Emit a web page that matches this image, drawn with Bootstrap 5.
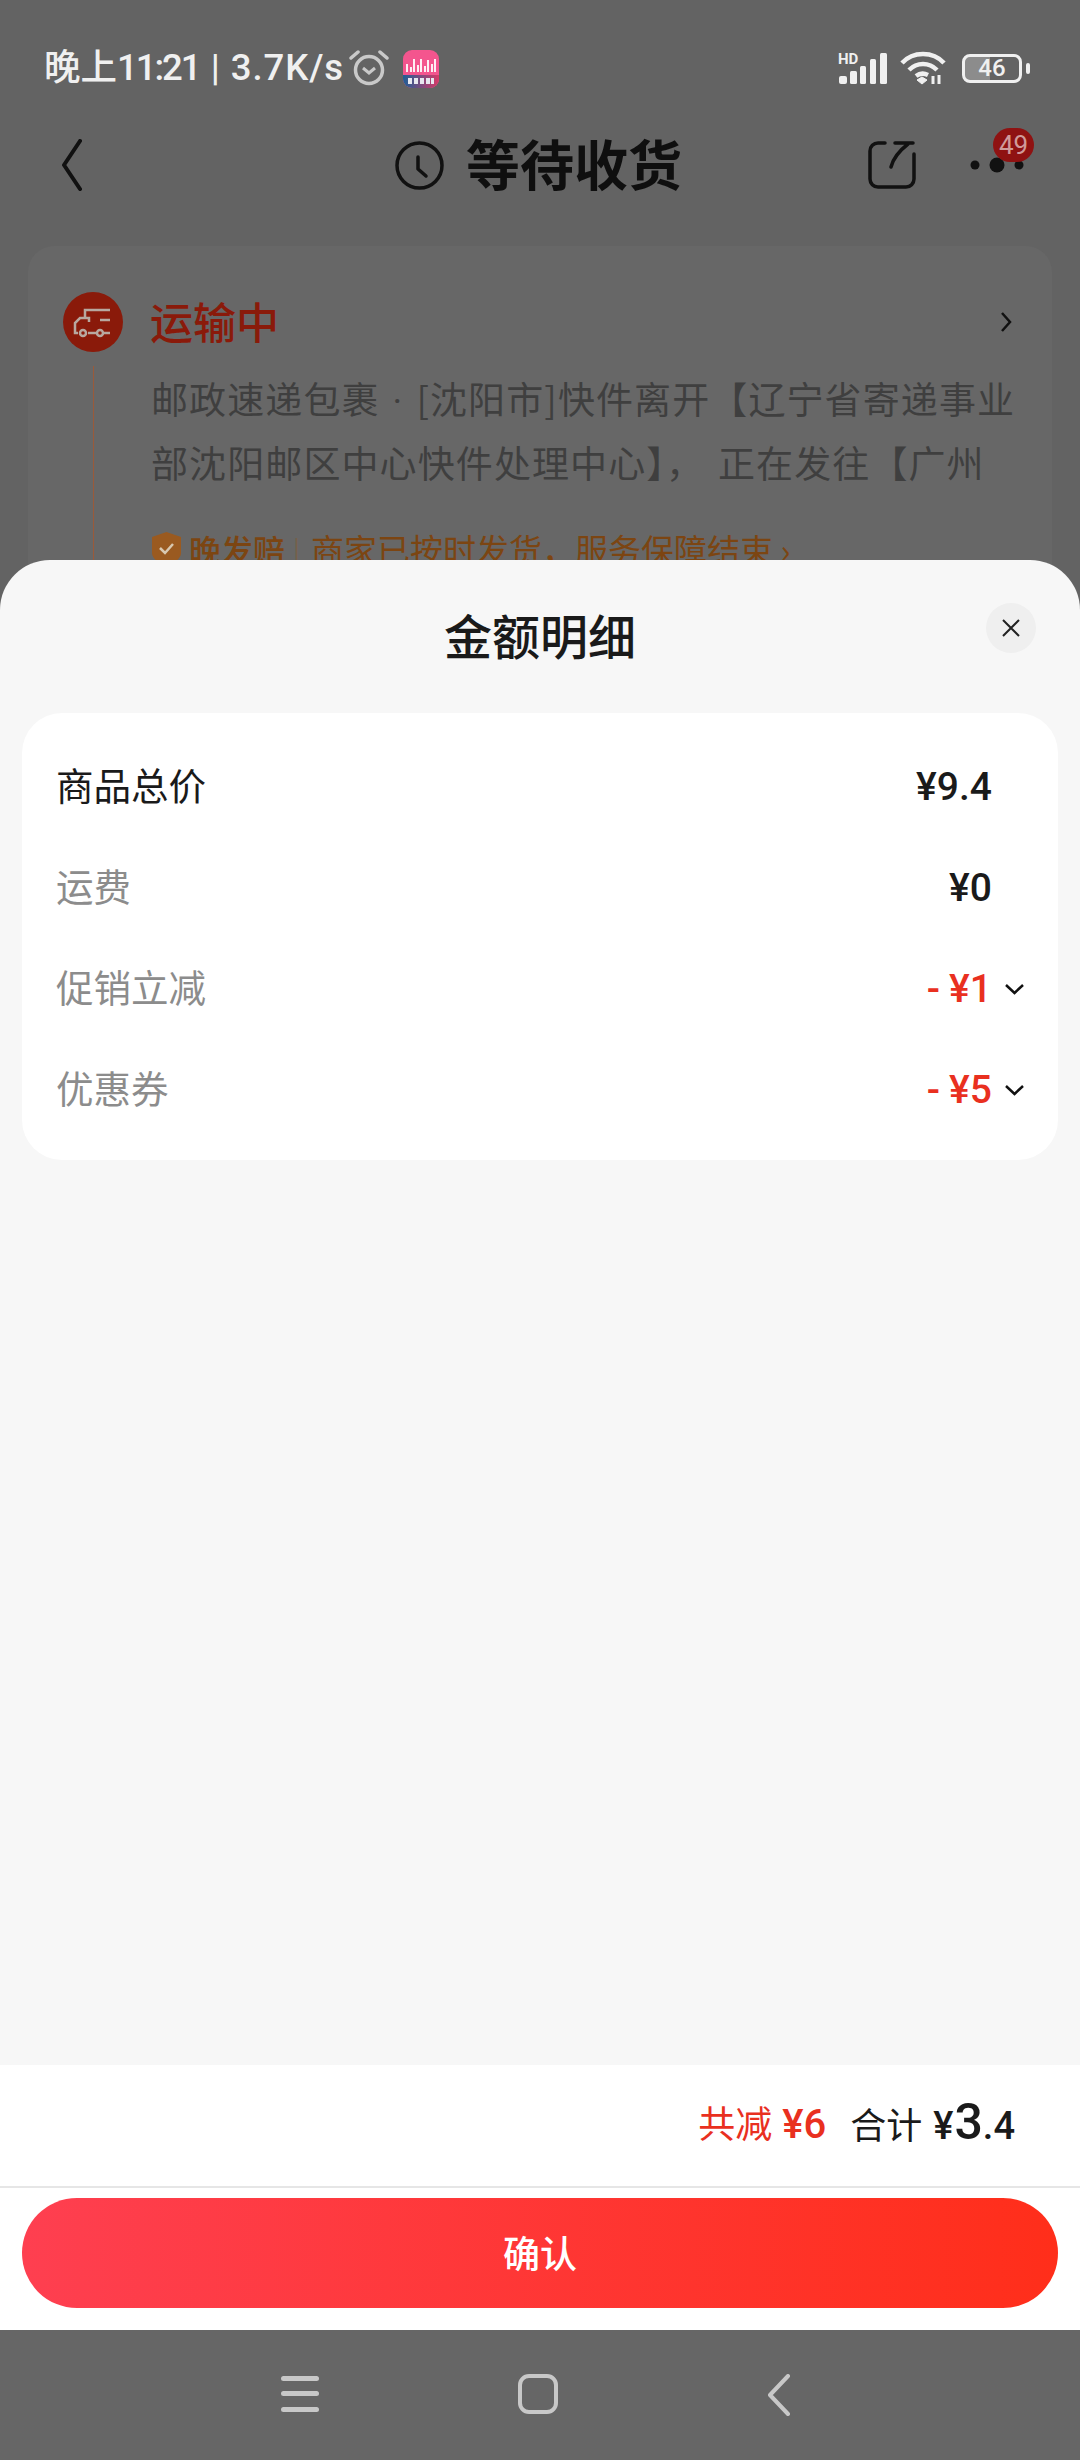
<!DOCTYPE html>
<html lang="zh-CN">

<head>
    <meta charset="UTF-8">
    <meta name="viewport" content="width=device-width, initial-scale=1.0">
    <title>金额明细</title>
    <link href="https://cdn.jsdelivr.net/npm/bootstrap@5.3.0/dist/css/bootstrap.min.css" rel="stylesheet">
    <style>
        body {
            margin: 0;
            width: 1080px;
            height: 2460px;
            background-color: #636363;
            font-family: "Noto Sans CJK SC", "Liberation Sans", sans-serif;
            color: #111;
        }
        .num { font-family: Roboto, "Liberation Sans", sans-serif; font-weight: 500; }
        .page-back { height: 2330px; overflow: hidden; }

        .status-row { height: 116px; padding: 44px 50px 0 44px; color: #f0f0f0; }
        .status-time { font-family: Roboto, "Noto Sans CJK SC", sans-serif; font-size: 36.5px; font-weight: 500; line-height: 48px; white-space: nowrap; }
        .time-digits { letter-spacing: -2px; }
        .time-sep { margin: 0 2px; }
        .time-speed { letter-spacing: .9px; }
        .status-alarm { margin: 6px 0 0 5px; }
        .app-tile { margin: 6px 0 0 14px; }
        .status-icons { height: 48px; }
        .status-wifi { margin-left: 12px; }
        .batt-box {
            width: 60px; height: 29px; margin-left: 16px;
            border: 3px solid #f0f0f0; border-radius: 8px;
            font: 500 24px/23px Roboto, sans-serif; color: #f0f0f0; text-align: center;
            background: linear-gradient(90deg, #8c8c8c 46%, transparent 46%);
        }
        .batt-cap { width: 4px; height: 11px; margin-left: 4px; background: #f0f0f0; border-radius: 2px; }

        .title-row { height: 98px; margin-bottom: 32px; padding: 0 56px 0 62px; position: relative; }
        .title-main { font-size: 54px; font-weight: 700; line-height: 70px; color: #0f0f0f; margin: 0 0 4px 22px; }
        .title-clock { margin-left: 313px; }
        .title-share { margin-left: auto; }
        .title-more { margin-left: 54px; }
        .msg-badge {
            position: absolute; left: 993px; top: 12px;
            width: 41px; height: 34px; border-radius: 17px;
            background: #8f1212; color: #d09a9a;
            font: 400 26px/34px Roboto, sans-serif; text-align: center;
        }

        .track-panel { margin: 0 28px; height: 400px; background: #676767; border-radius: 26px 26px 0 0; padding: 46px 40px 0 35px; }
        .track-head { height: 60px; }
        .track-title { font-size: 43px; line-height: 60px; font-weight: 500; color: #8a1a0a; margin: 0 0 5px 27px; }
        .track-body { margin-left: 30px; margin-top: 14px; border-left: 1px solid #9a5a3a; padding: 2px 0 0 57px; height: 300px; }
        .track-text { font-size: 37px; letter-spacing: 1.1px; line-height: 61px; color: #3f3f3f; width: 880px; white-space: nowrap; }
        .track-dot { font-family: Roboto, sans-serif; margin: 0 13px; }
        .track-comma { margin-right: 14px; }
        .track-tag { margin-top: 34px; font-size: 33px; line-height: 44px; color: #7c4512; white-space: nowrap; }
        .tag-lead { font-size: 32px; font-weight: 500; margin-left: 7px; }
        .tag-sep { color: #76604a; margin: 0 11px 0 8px; font-size: 26px; }

        .sheet {
            position: absolute; left: 0; right: 0; top: 560px; height: 1770px;
            background: #f7f7f7; border-radius: 50px 50px 0 0;
        }
        .sheet-head { height: 153px; position: relative; }
        .sheet-title { font-size: 48px; font-weight: 500; line-height: 64px; padding-top: 42px; color: #1a1a1a; }
        .sheet-close {
            position: absolute; left: 986px; top: 43px;
            width: 50px; height: 50px; border-radius: 50%; background: #efefef;
        }
        .fee-panel { margin: 0 22px; height: 447px; background: #fff; border-radius: 40px; padding-top: 23px; }
        .fee-row { height: 101px; padding-left: 34px; }
        .fee-label { font-size: 37.5px; line-height: 50px; color: #8c8c8c; margin-top: -6px; }
        .fee-label.on { color: #1a1a1a; }
        .fee-val { font-size: 39px; line-height: 50px; color: #1a1a1a; margin-left: auto; margin-right: 66px; }
        .fee-val.cut { color: #e9301f; margin-right: 0; }
        .fee-val.cut .dash { margin-right: 9px; }
        .fee-caret { margin-left: 12px; margin-right: 33px; }

        .sum-bar { height: 123px; background: #fff; border-bottom: 2px solid #e6e6e6; padding-right: 65px; margin-top: auto; }
        .sum-cut { font-size: 37px; line-height: 50px; color: #e9301f; margin-top: -4px; }
        .sum-cut .num { font-size: 40px; margin-left: 10px; }
        .sum-all { font-size: 36px; line-height: 50px; color: #1a1a1a; margin: -4px 0 0 24px; white-space: nowrap; }
        .sum-yen { font-size: 38px; margin-left: 11px; }
        .sum-big { font-size: 50px; line-height: 50px; margin-left: 1px; }
        .sum-dec { font-size: 38px; }
        .confirm-wrap { height: 142px; background: #fff; padding: 10px 22px 0; }
        .btn-confirm {
            width: 100%; height: 110px; border: 0; border-radius: 55px;
            background: linear-gradient(90deg, #fe3f50, #ff2e1a);
            color: #fff; font-size: 37px; font-weight: 500;
        }
        .btn-confirm:hover, .btn-confirm:active { background: linear-gradient(90deg, #fe3f50, #ff2e1a); color: #fff; }

        .sys-nav { height: 130px; background: #666; padding-top: 44px; }
        .nav-menu { margin-left: 281px; }
        .nav-home { margin-left: 199px; }
        .nav-back { margin-left: 207px; }
    </style>
</head>

<body>
    <div class="page-back">
        <div class="status-row d-flex align-items-start">
            <span class="status-time">晚上<span class="time-digits">11:21</span> <span class="time-sep">|</span> <span class="time-speed">3.7K/s</span></span>
            <svg class="status-alarm" width="40" height="36" viewBox="0 0 40 36" fill="none" stroke="#c9c9c9">
                <circle cx="20" cy="20" r="13.500" stroke-width="3.500"/>
                <path d="M14 18l6 5 6-5" stroke-width="3"/>
                <path d="M2 8l7-6M38 8l-7-6" stroke-width="3.500" stroke-linecap="round"/>
            </svg>
            <svg class="app-tile" width="36" height="38" viewBox="0 0 36 38">
                <defs>
                    <linearGradient id="bandFill" x1="0" x2="1" y1="0" y2="0">
                        <stop offset="0" stop-color="#1f5f96"/>
                        <stop offset="1" stop-color="#d83a68"/>
                    </linearGradient>
                </defs>
                <rect width="36" height="38" rx="9" fill="#f4558e"/>
                <path d="M0 25h36v4a9 9 0 0 1-9 9H9a9 9 0 0 1-9-9z" fill="url(#bandFill)"/>
                <path d="M4 14v8M8 17v5M11 9v13M15 15v7M18 9v13M22 16v6M25 10v12M29 14v8M32 9v13" stroke="#fff" stroke-width="1.800"/>
                <path d="M5 28h4v6H5zM11 28h4v6h-4zM17 28h4v6h-4zM23 28h4v6h-4zM28 28h3v6h-3z" fill="#e8e8f0"/>
            </svg>
            <div class="ms-auto d-flex align-items-center status-icons">
                <svg width="50" height="33" viewBox="0 0 50 33" fill="#f0f0f0">
                    <rect x="1" y="24" width="8" height="8" rx="2"/>
                    <rect x="12" y="19" width="7" height="13" rx="1.500"/>
                    <rect x="22" y="14" width="6" height="18" rx="1.500"/>
                    <rect x="32" y="7" width="6" height="25" rx="1.500"/>
                    <rect x="42" y="1" width="7" height="31" rx="1.500"/>
                    <text x="0" y="12" font-family="Roboto, sans-serif" font-size="15" font-weight="700">HD</text>
                </svg>
                <svg class="status-wifi" width="46" height="34" viewBox="0 0 46 34" fill="none" stroke="#f0f0f0" stroke-width="4.500">
                    <path d="M2 12C13 0 33 0 44 12"/>
                    <path d="M9 19c8-8 20-8 28 0"/>
                    <path d="M16 25c4-3 8-3 12-1"/>
                    <path d="M17 29l5-3 5 3-5 4z" fill="#f0f0f0" stroke-width="1"/>
                    <path d="M33 25v8M39 24v9" stroke-width="3"/>
                </svg>
                <div class="batt-box">46</div>
                <div class="batt-cap"></div>
            </div>
        </div>

        <div class="title-row d-flex align-items-center">
            <svg width="20" height="52" viewBox="0 0 20 52" fill="none" stroke="#111" stroke-width="4" stroke-linecap="round" stroke-linejoin="round">
                <path d="M18 2L2 26l16 24"/>
            </svg>
            <svg class="title-clock" width="49" height="49" viewBox="0 0 49 49" fill="none" stroke="#111" stroke-width="3.500" stroke-linecap="round" stroke-linejoin="round">
                <circle cx="24.500" cy="24.500" r="22.500"/>
                <path d="M23 16v12l8 7"/>
            </svg>
            <span class="title-main">等待收货</span>
            <svg class="title-share" width="48" height="48" viewBox="0 0 48 48" fill="none" stroke="#111" stroke-width="3.500" stroke-linecap="round" stroke-linejoin="round">
                <path d="M17 2H10a8 8 0 0 0-8 8v28a8 8 0 0 0 8 8h28a8 8 0 0 0 8-8V13"/>
                <path d="M23 26c2-8 8-16 17-23M27 2h18"/>
            </svg>
            <svg class="title-more" width="54" height="16" viewBox="0 0 54 16" fill="#111">
                <circle cx="5" cy="8" r="4.500"/>
                <circle cx="27" cy="8" r="7.500"/>
                <circle cx="49" cy="8" r="4.500"/>
            </svg>
            <span class="msg-badge">49</span>
        </div>

        <div class="track-panel">
            <div class="track-head d-flex align-items-center">
                <svg width="60" height="60" viewBox="0 0 60 60">
                    <circle cx="30" cy="30" r="30" fill="#8a1a0a"/>
                    <path d="M22 26v-8h25M47 41H41M33 41H25M15 41h-3V31l5-5h9v4" fill="none" stroke="#b8a8a0" stroke-width="2.500"/>
                    <path d="M37 28h10" stroke="#b8a8a0" stroke-width="2.500"/>
                    <circle cx="20" cy="41" r="3" fill="none" stroke="#b8a8a0" stroke-width="2.500"/>
                    <circle cx="37" cy="41" r="3" fill="none" stroke="#b8a8a0" stroke-width="2.500"/>
                </svg>
                <span class="track-title">运输中</span>
                <svg class="ms-auto" width="12" height="22" viewBox="0 0 12 22" fill="none" stroke="#111" stroke-width="2.500">
                    <path d="M2 2l8 9-8 9"/>
                </svg>
            </div>
            <div class="track-body">
                <div class="track-text">邮政速递包裹<span class="track-dot">·</span>[沈阳市]快件离开【辽宁省寄递事业<br>部沈阳邮区中心快件处理中心】<span class="track-comma">，</span>正在发往【广州</div>
                <div class="track-tag d-flex align-items-center">
                    <svg width="31" height="36" viewBox="0 0 31 36">
                        <path d="M15.500 1L30 6v16c0 6-8 11-14.500 13C9 33 1 28 1 22V6z" fill="#9a5a20"/>
                        <path d="M9 17l5 5 8-9" fill="none" stroke="#d8c8b0" stroke-width="2.500"/>
                    </svg>
                    <span class="tag-lead">晚发赔</span>
                    <span class="tag-sep">|</span>
                    <span>商家已按时发货，服务保障结束 ›</span>
                </div>
            </div>
        </div>
    </div>

    <div class="sheet d-flex flex-column">
        <div class="sheet-head">
            <div class="sheet-title text-center">金额明细</div>
            <div class="sheet-close d-flex align-items-center justify-content-center">
                <svg width="20" height="20" viewBox="0 0 20 20" fill="none" stroke="#222" stroke-width="2">
                    <path d="M2 2l16 16M18 2L2 18"/>
                </svg>
            </div>
        </div>
        <div class="fee-panel">
            <div class="fee-row d-flex align-items-center">
                <span class="fee-label on">商品总价</span>
                <span class="fee-val num">¥9.4</span>
            </div>
            <div class="fee-row d-flex align-items-center">
                <span class="fee-label">运费</span>
                <span class="fee-val num">¥0</span>
            </div>
            <div class="fee-row d-flex align-items-center">
                <span class="fee-label">促销立减</span>
                <span class="fee-val cut num"><span class="dash">-</span>¥1</span>
                <svg class="fee-caret" width="21" height="12" viewBox="0 0 21 12" fill="none" stroke="#111" stroke-width="2.500"><path d="M2 2l8.500 8L19 2"/></svg>
            </div>
            <div class="fee-row d-flex align-items-center">
                <span class="fee-label">优惠券</span>
                <span class="fee-val cut num"><span class="dash">-</span>¥5</span>
                <svg class="fee-caret" width="21" height="12" viewBox="0 0 21 12" fill="none" stroke="#111" stroke-width="2.500"><path d="M2 2l8.500 8L19 2"/></svg>
            </div>
        </div>
        <div class="sum-bar d-flex align-items-center justify-content-end">
            <span class="sum-cut">共减<span class="num">¥6</span></span>
            <span class="sum-all">合计<span class="num sum-yen">¥</span><span class="num sum-big">3</span><span class="num sum-dec">.4</span></span>
        </div>
        <div class="confirm-wrap">
            <button type="button" class="btn btn-confirm">确认</button>
        </div>
    </div>

    <div class="sys-nav d-flex align-items-start">
        <svg class="nav-menu" width="38" height="40" viewBox="0 0 38 40" fill="#c8c8c8">
            <rect y="2" width="38" height="5" rx="2.500"/>
            <rect y="17" width="38" height="5" rx="2.500"/>
            <rect y="33" width="38" height="5" rx="2.500"/>
        </svg>
        <svg class="nav-home" width="40" height="40" viewBox="0 0 40 40" fill="none" stroke="#c8c8c8" stroke-width="4">
            <rect x="2" y="2" width="36" height="36" rx="9"/>
        </svg>
        <svg class="nav-back" width="26" height="42" viewBox="0 0 26 42" fill="none" stroke="#c8c8c8" stroke-width="4" stroke-linecap="round" stroke-linejoin="round">
            <path d="M23 2L5 21l18 19"/>
        </svg>
    </div>

    <script src="https://cdn.jsdelivr.net/npm/bootstrap@5.3.0/dist/js/bootstrap.bundle.min.js"></script>
</body>

</html>
